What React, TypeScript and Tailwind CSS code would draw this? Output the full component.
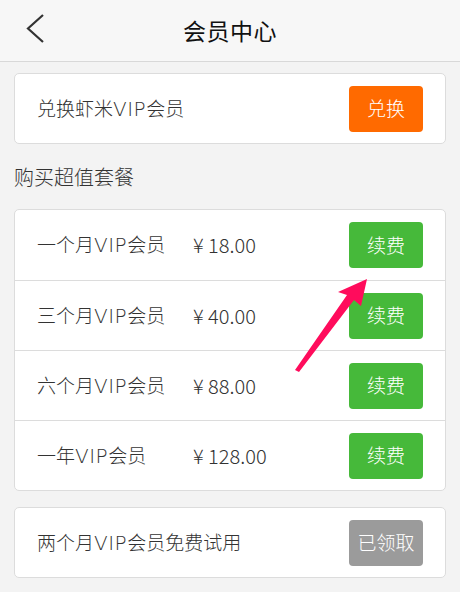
import React from "react";

const font = { fontFamily: '"Noto Sans CJK SC", "Noto Sans", sans-serif' };

function Btn({ label, color }: { label: string; color: string }) {
  return (
    <div
      className={`w-[74px] h-[46px] rounded-[4px] flex items-center justify-center text-white text-[19px] font-light ${color}`}
    >
      {label}
    </div>
  );
}

function Vip({ pre, post }: { pre: string; post: string }) {
  return (
    <>
      {pre}
      <span className="font-['DejaVu_Sans',sans-serif] font-extralight text-[20px] tracking-[0.5px]">VIP</span>
      {post}
    </>
  );
}

const plans = [
  { pre: "一个月", post: "会员", price: "¥ 18.00" },
  { pre: "三个月", post: "会员", price: "¥ 40.00" },
  { pre: "六个月", post: "会员", price: "¥ 88.00" },
  { pre: "一年", post: "会员", price: "¥ 128.00" },
];

export default function App() {
  return (
    <div
      className="relative w-[460px] h-[592px] overflow-hidden bg-[#f3f3f3] text-[#333] font-light"
      style={font}
    >
      <div className="relative h-[62px] bg-[#f7f7f7] border-b border-[#d8d8d8] flex items-center justify-center">
        <svg
          className="absolute left-[24px] top-[13px]"
          width="22"
          height="32"
          viewBox="0 0 22 32"
        >
          <path
            d="M19 2 L4 15.5 L19 29"
            fill="none"
            stroke="#333"
            strokeWidth="2.2"
          />
        </svg>
        <div className="text-[23px] font-normal text-[#111] tracking-[0.5px]">会员中心</div>
      </div>

      <div className="px-[14px] pt-[11px]">
        <div className="h-[71px] bg-white border border-[#dcdcdc] rounded-[5px] flex items-center justify-between pl-[22px] pr-[22px]">
          <div className="text-[19px]">
            <Vip pre="兑换虾米" post="会员" />
          </div>
          <Btn label="兑换" color="bg-[#ff6a00]" />
        </div>

        <div className="h-[65px] flex items-center text-[20px] text-[#333]">购买超值套餐</div>

        <div className="bg-white border border-[#dcdcdc] rounded-[5px] flex flex-col">
          {plans.map((p, i) => (
            <div
              key={p.pre}
              className={`h-[70px] flex items-center pl-[22px] pr-[22px] ${
                i > 0 ? "border-t border-[#dcdcdc]" : ""
              }`}
            >
              <div className="w-[156px] text-[19px]">
                <Vip pre={p.pre} post={p.post} />
              </div>
              <div className="flex-1 text-[20px]">{p.price}</div>
              <Btn label="续费" color="bg-[#46b93a]" />
            </div>
          ))}
        </div>

        <div className="mt-[16px] h-[71px] bg-white border border-[#dcdcdc] rounded-[5px] flex items-center justify-between pl-[22px] pr-[22px]">
          <div className="text-[19px]">
            <Vip pre="两个月" post="会员免费试用" />
          </div>
          <Btn label="已领取" color="bg-[#9b9b9b]" />
        </div>
      </div>

      <svg
        className="absolute left-0 top-0 pointer-events-none"
        width="460"
        height="592"
        viewBox="0 0 460 592"
      >
        <polygon
          points="367,279 361,306 354,300 299,372 295,370 347,295 338,292"
          fill="#ff0c5c"
          strokeLinejoin="round"
        />
      </svg>
    </div>
  );
}
